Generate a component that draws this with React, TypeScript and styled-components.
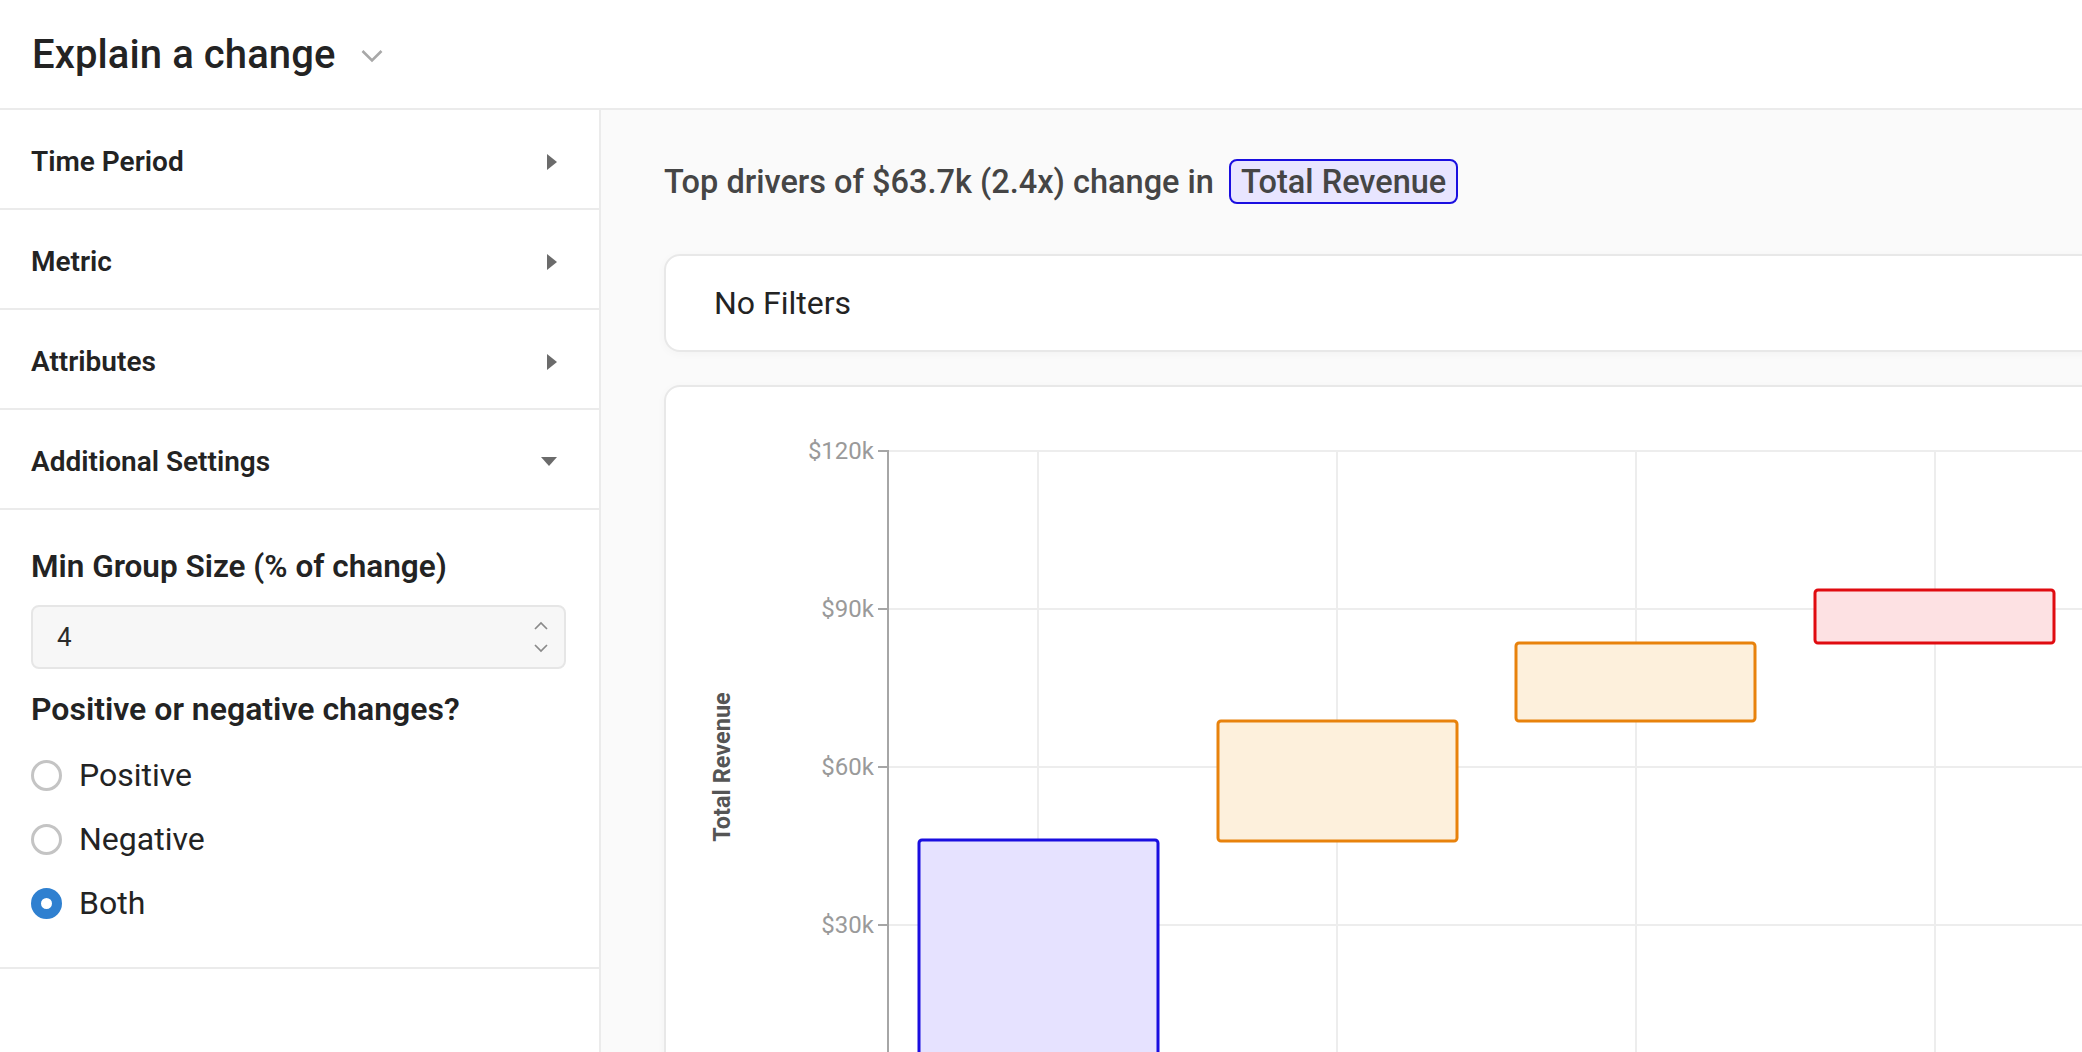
import React from "react";
import styled, { createGlobalStyle } from "styled-components";

const GlobalStyle = createGlobalStyle`
  html, body {
    margin: 0;
    padding: 0;
    background: #ffffff;
    font-family: Roboto, "Liberation Sans", Arial, sans-serif;
    overflow: hidden;
  }
  * { box-sizing: border-box; }
`;

const Page = styled.div`
  display: flex;
  flex-direction: column;
  width: 100vw;
  height: 100vh;
`;

const Header = styled.header`
  height: 110px;
  flex-shrink: 0;
  display: flex;
  align-items: center;
  gap: 25px;
  padding-left: 32px;
  border-bottom: 2px solid #ebebeb;
`;

const Title = styled.h1`
  margin: 0;
  font-size: 40px;
  font-weight: 500;
  color: #232323;
  letter-spacing: 0.1px;
`;

const Body = styled.div`
  flex: 1;
  display: flex;
  min-height: 0;
`;

const Sidebar = styled.aside`
  width: 601px;
  flex-shrink: 0;
  border-right: 2px solid #ebebeb;
  background: #ffffff;
  display: flex;
  flex-direction: column;
`;

const AccordionRow = styled.div`
  height: 100px;
  display: flex;
  align-items: center;
  justify-content: space-between;
  padding: 5px 42px 0 31px;
  border-bottom: 2px solid #ebebeb;
`;

const RowLabel = styled.span`
  font-size: 28px;
  font-weight: 600;
  color: #232323;
`;

const SettingsPanel = styled.div`
  display: flex;
  flex-direction: column;
  padding: 38px 33px 40px 31px;
  border-bottom: 2px solid #ebebeb;
`;

const FieldLabel = styled.div<{ $gap?: number; $size?: number }>`
  font-size: ${(p) => p.$size ?? 32}px;
  font-weight: 600;
  color: #232323;
  line-height: 38px;
  margin-top: ${(p) => p.$gap ?? 0}px;
`;

const NumberBox = styled.div`
  margin-top: 19px;
  height: 64px;
  display: flex;
  align-items: center;
  justify-content: space-between;
  padding: 0 16px 0 24px;
  background: #f7f7f7;
  border: 2px solid #e6e6e6;
  border-radius: 8px;
  font-size: 26px;
  color: #2b2b2b;
`;

const Spinner = styled.div`
  display: flex;
  flex-direction: column;
  gap: 14px;
`;

const RadioList = styled.div`
  display: flex;
  flex-direction: column;
  gap: 16px;
  margin-top: 23px;
`;

const RadioRow = styled.label`
  height: 48px;
  display: flex;
  align-items: center;
  gap: 17px;
  font-size: 32px;
  color: #232323;
`;

const RadioDot = styled.span<{ $checked?: boolean }>`
  width: 31px;
  height: 31px;
  border-radius: 50%;
  flex-shrink: 0;
  background: #ffffff;
  border: ${(p) => (p.$checked ? "10.5px solid #2f80d0" : "3px solid #c4c4c4")};
`;

const Main = styled.main`
  flex: 1;
  min-width: 0;
  background: #fafafa;
  padding: 49px 0 0 63px;
  overflow: hidden;
`;

const MainInner = styled.div`
  width: 1560px;
  display: flex;
  flex-direction: column;
`;

const Headline = styled.div`
  height: 45px;
  display: flex;
  align-items: center;
  gap: 15px;
  font-size: 32.5px;
  font-weight: 500;
  color: #454545;
`;

const Badge = styled.span`
  height: 45px;
  display: inline-flex;
  align-items: center;
  padding: 0 10px;
  background: #e8e5ff;
  border: 2px solid #1a0ee0;
  border-radius: 8px;
  color: #454545;
`;

const FilterBox = styled.div`
  margin-top: 50px;
  height: 98px;
  display: flex;
  align-items: center;
  padding-left: 48px;
  background: #ffffff;
  border: 2px solid #e8e8e8;
  border-radius: 16px;
  box-shadow: 0 2px 10px rgba(0, 0, 0, 0.03);
  font-size: 32px;
  color: #232323;
`;

const ChartCard = styled.div`
  margin-top: 33px;
  height: 760px;
  background: #ffffff;
  border: 2px solid #e8e8e8;
  border-radius: 16px;
  box-shadow: 0 2px 10px rgba(0, 0, 0, 0.03);
  overflow: hidden;
`;

const ChartSvg = styled.svg`
  display: block;
  font-family: Roboto, "Liberation Sans", Arial, sans-serif;
`;

const RightTriangle = () => (
  <svg width="10" height="16" viewBox="0 0 10 16">
    <path d="M0 0 L10 8 L0 16 Z" fill="#6b6b6b" />
  </svg>
);

const DownTriangle = () => (
  <svg width="16" height="9" viewBox="0 0 16 9">
    <path d="M0 0 L16 0 L8 9 Z" fill="#6b6b6b" />
  </svg>
);

const HeaderChevron = () => (
  <svg width="22" height="14" viewBox="0 0 22 14" style={{ marginTop: 4 }}>
    <path d="M1.5 2 L11 11.5 L20.5 2" fill="none" stroke="#a8a8a8" strokeWidth="2.6" />
  </svg>
);

const SmallChevron = ({ up }: { up?: boolean }) => (
  <svg width="14" height="9" viewBox="0 0 14 9">
    <path
      d={up ? "M1 8 L7 2 L13 8" : "M1 1 L7 7 L13 1"}
      fill="none"
      stroke="#8a8a8a"
      strokeWidth="1.7"
    />
  </svg>
);

const bars = [
  { x: 253, y: 453, h: 400, fill: "#e6e2ff", stroke: "#1a0ee0" },
  { x: 552, y: 334, h: 120, fill: "#fdf0dc", stroke: "#e8820c" },
  { x: 850, y: 256, h: 78, fill: "#fdf0dc", stroke: "#e8820c" },
  { x: 1149, y: 203, h: 53, fill: "#fde1e3", stroke: "#e00b10" },
];

const ticks = [
  { label: "$120k", y: 64 },
  { label: "$90k", y: 222 },
  { label: "$60k", y: 380 },
  { label: "$30k", y: 538 },
];

const gridX = [372, 671, 970, 1269];

const Chart = () => (
  <ChartSvg width="1556" height="756" viewBox="0 0 1556 756">
    {ticks.map((t) => (
      <line key={"h" + t.label} x1={222} x2={1556} y1={t.y} y2={t.y} stroke="#ededed" strokeWidth="2" />
    ))}
    <line x1={222} x2={1556} y1={696} y2={696} stroke="#ededed" strokeWidth="2" />
    {gridX.map((x) => (
      <line key={"v" + x} x1={x} x2={x} y1={64} y2={756} stroke="#ededed" strokeWidth="2" />
    ))}
    <line x1={222} x2={222} y1={63} y2={756} stroke="#a6a6a6" strokeWidth="2" />
    {ticks.map((t) => (
      <g key={"t" + t.label}>
        <line x1={212} x2={222} y1={t.y} y2={t.y} stroke="#a6a6a6" strokeWidth="2" />
        <text x={208} y={t.y + 8} textAnchor="end" fontSize="24" fill="#9a9a9a">
          {t.label}
        </text>
      </g>
    ))}
    <text
      transform="translate(64 380) rotate(-90)"
      textAnchor="middle"
      fontSize="23.5"
      fontWeight="700"
      fill="#555555"
    >
      Total Revenue
    </text>
    {bars.map((b, i) => (
      <rect
        key={i}
        x={b.x}
        y={b.y}
        width={239}
        height={b.h}
        rx={3}
        fill={b.fill}
        stroke={b.stroke}
        strokeWidth="3"
      />
    ))}
  </ChartSvg>
);

export default function App() {
  return (
    <Page>
      <GlobalStyle />
      <Header>
        <Title>Explain a change</Title>
        <HeaderChevron />
      </Header>
      <Body>
        <Sidebar>
          <AccordionRow>
            <RowLabel>Time Period</RowLabel>
            <RightTriangle />
          </AccordionRow>
          <AccordionRow>
            <RowLabel>Metric</RowLabel>
            <RightTriangle />
          </AccordionRow>
          <AccordionRow>
            <RowLabel>Attributes</RowLabel>
            <RightTriangle />
          </AccordionRow>
          <AccordionRow>
            <RowLabel>Additional Settings</RowLabel>
            <DownTriangle />
          </AccordionRow>
          <SettingsPanel>
            <FieldLabel $size={31.5}>Min Group Size (% of change)</FieldLabel>
            <NumberBox>
              <span>4</span>
              <Spinner>
                <SmallChevron up />
                <SmallChevron />
              </Spinner>
            </NumberBox>
            <FieldLabel $gap={21}>Positive or negative changes?</FieldLabel>
            <RadioList>
              <RadioRow>
                <RadioDot />
                Positive
              </RadioRow>
              <RadioRow>
                <RadioDot />
                Negative
              </RadioRow>
              <RadioRow>
                <RadioDot $checked />
                Both
              </RadioRow>
            </RadioList>
          </SettingsPanel>
        </Sidebar>
        <Main>
          <MainInner>
            <Headline>
              <span>Top drivers of $63.7k (2.4x) change in</span>
              <Badge>Total Revenue</Badge>
            </Headline>
            <FilterBox>No Filters</FilterBox>
            <ChartCard>
              <Chart />
            </ChartCard>
          </MainInner>
        </Main>
      </Body>
    </Page>
  );
}
